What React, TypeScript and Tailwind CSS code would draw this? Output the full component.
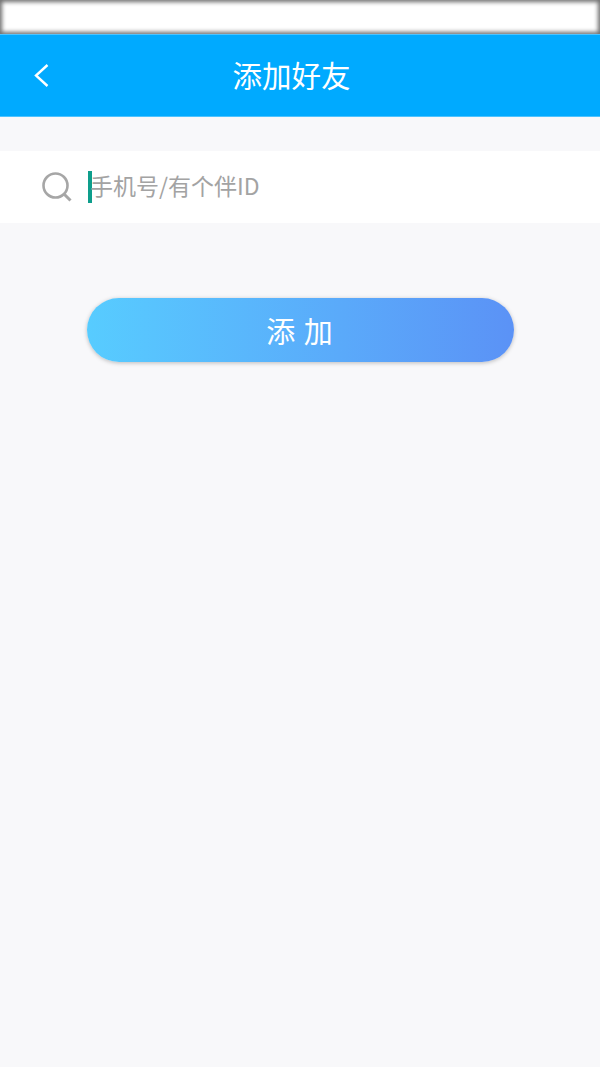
const cjk = "font-['Noto_Sans_CJK_SC','Noto_Sans',sans-serif]";

export default function App() {
  return (
    <div className={`flex h-[1067px] w-[600px] flex-col overflow-hidden bg-[#f8f8fa] ${cjk}`}>
      {/* top strip */}
      <div className="h-[34px] shrink-0 bg-white shadow-[inset_0_0_4px_2px_rgba(60,60,60,0.75)]" />

      <header className="relative flex h-[83px] shrink-0 items-center justify-center border-y border-[#4dc3ff] bg-[#00aaff] pb-[2px] pr-[17px]">
        <button aria-label="Back" className="absolute left-[29px] top-[25px] text-white">
          <svg width="24" height="30" viewBox="0 0 24 30" fill="none">
            <path d="M18.5 5 L7 15.5 L18.5 26" stroke="currentColor" strokeWidth="2.4" />
          </svg>
        </button>
        <h1 className="text-[29.5px] font-normal leading-none text-white">添加好友</h1>
      </header>

      <div className="mt-[34px] flex h-[72px] shrink-0 items-center bg-white pl-[42px]">
        <svg width="30" height="30" viewBox="0 0 30 30" fill="none" className="shrink-0 text-[#a6a6a6]">
          <circle cx="13.5" cy="13.5" r="12" stroke="currentColor" strokeWidth="2.6" />
          <path d="M22.5 22.5 L28.5 28.5" stroke="currentColor" strokeWidth="3" />
        </svg>
        <div className="ml-[16px] h-[32px] w-[4px] shrink-0 bg-[#0e9e8c]" />
        <span className="-ml-[2px] pb-[3px] text-[23px] leading-none text-[#a3a3a3]">手机号/有个伴ID</span>
      </div>

      <div className="mt-[75px] flex justify-center">
        <button className="flex h-[64px] w-[427px] items-center justify-center rounded-full bg-gradient-to-r from-[#57ccff] to-[#5b92f6] text-[29px] leading-none tracking-[1px] text-white shadow-[0_1px_4px_rgba(0,0,0,0.25)]">
          添 加
        </button>
      </div>
    </div>
  );
}
